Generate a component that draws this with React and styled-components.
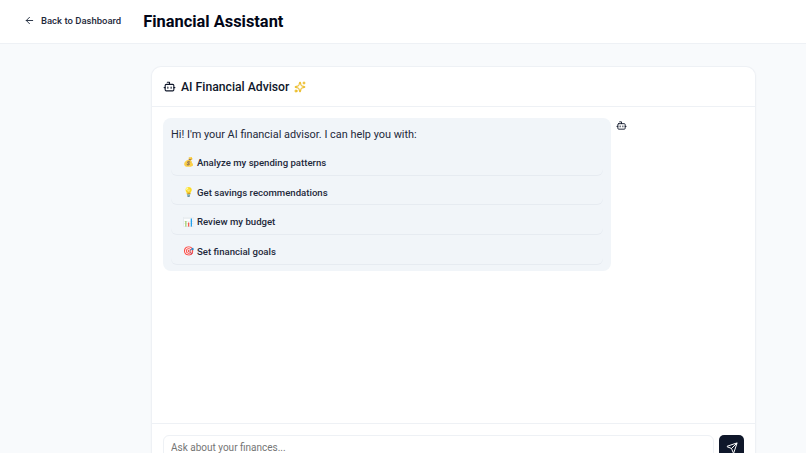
import React from 'react';
import styled, { createGlobalStyle } from 'styled-components';
import { ArrowLeft, Bot, Send, Sparkles } from 'lucide-react';

const suggestions = [
  { emoji: '💰', text: 'Analyze my spending patterns' },
  { emoji: '💡', text: 'Get savings recommendations' },
  { emoji: '📊', text: 'Review my budget' },
  { emoji: '🎯', text: 'Set financial goals' },
];

const App = () => {
  return (
    <Page>
      <GlobalStyle />
      <Header>
        <BackLink>
          <ArrowLeft size={11} strokeWidth={2} />
          Back to Dashboard
        </BackLink>
        <PageTitle>Financial Assistant</PageTitle>
      </Header>
      <Main>
        <Card>
          <CardHeader>
            <Bot size={13} strokeWidth={2} />
            <CardTitle>AI Financial Advisor</CardTitle>
            <Sparkles size={12} strokeWidth={2} color="#eab308" />
          </CardHeader>
          <Messages>
            <Bubble>
              <Intro>Hi! I'm your AI financial advisor. I can help you with:</Intro>
              <SuggestionList>
                {suggestions.map((item) => (
                  <Suggestion key={item.text}>
                    <Emoji>{item.emoji}</Emoji>
                    {item.text}
                  </Suggestion>
                ))}
              </SuggestionList>
            </Bubble>
            <BubbleIcon>
              <Bot size={11} strokeWidth={2} />
            </BubbleIcon>
          </Messages>
          <Composer>
            <ChatInput placeholder="Ask about your finances..." />
            <SendButton>
              <Send size={12} strokeWidth={2} />
            </SendButton>
          </Composer>
        </Card>
      </Main>
    </Page>
  );
};

const GlobalStyle = createGlobalStyle`
  html,
  body {
    margin: 0;
    height: 100%;
    overflow: hidden;
  }

  body {
    font-family: Roboto, sans-serif;
    color: #0f172a;
    background: #f8fafc;
  }

  * {
    box-sizing: border-box;
  }
`;

const Page = styled.div`
  height: 453px;
  overflow: hidden;
  background: #f8fafc;
`;

const Header = styled.header`
  height: 44px;
  display: flex;
  align-items: center;
  gap: 22px;
  padding: 0 24px;
  background: #ffffff;
  border-bottom: 1px solid #eef1f5;
`;

const BackLink = styled.a`
  display: flex;
  align-items: center;
  gap: 6px;
  margin-top: -3px;
  font-size: 9.5px;
  font-weight: 500;
  color: #1e293b;
`;

const PageTitle = styled.h1`
  margin: -1px 0 0;
  font-size: 16.4px;
  font-weight: 700;
  color: #020617;
`;

const Main = styled.main`
  padding: 23px 51px 0 152px;
`;

const Card = styled.section`
  height: 416px;
  display: flex;
  flex-direction: column;
  background: #ffffff;
  border-radius: 9px;
  box-shadow: 0 0 0 1px #eef1f5, 0 1px 3px rgba(15, 23, 42, 0.08);
`;

const CardHeader = styled.div`
  height: 40px;
  flex-shrink: 0;
  display: flex;
  align-items: center;
  gap: 5px;
  padding: 0 11px;
  border-bottom: 1px solid #eef1f5;
`;

const CardTitle = styled.h2`
  margin: 0;
  font-size: 12.2px;
  font-weight: 500;
  color: #0f172a;
`;

const Messages = styled.div`
  flex: 1;
  display: flex;
  align-items: flex-start;
  gap: 5px;
  padding: 11px;
`;

const Bubble = styled.div`
  width: 448px;
  padding: 8px 8px 7px;
  background: #f1f5f9;
  border-radius: 8px;
`;

const BubbleIcon = styled.div`
  display: flex;
  padding-top: 2px;
  color: #0f172a;
`;

const Intro = styled.p`
  margin: 0;
  font-size: 10.9px;
  line-height: 17px;
  color: #1e293b;
`;

const SuggestionList = styled.ul`
  margin: 2px 0 0;
  padding: 0;
  list-style: none;
`;

const Suggestion = styled.li`
  height: 29.7px;
  display: flex;
  align-items: center;
  gap: 5px;
  padding: 5px 12px 0;
  font-size: 9.6px;
  font-weight: 500;
  color: #1e293b;
  border-radius: 6px;
  box-shadow: 0 1px 0 #e6ebf1;
`;

const Emoji = styled.span`
  width: 9px;
  font-size: 9px;
  opacity: 0.85;
`;

const Composer = styled.div`
  height: 60px;
  flex-shrink: 0;
  display: flex;
  gap: 5px;
  padding: 11px;
  border-top: 1px solid #eef1f5;
`;

const ChatInput = styled.input`
  flex: 1;
  height: 25px;
  padding: 0 7px;
  font-family: inherit;
  font-size: 10px;
  background: #ffffff;
  border: 1px solid #eef1f5;
  border-radius: 6px;

  ::placeholder {
    color: #64748b;
  }
`;

const SendButton = styled.button`
  width: 25px;
  height: 25px;
  display: flex;
  align-items: center;
  justify-content: center;
  padding: 0;
  color: #ffffff;
  background: #0f172a;
  border: none;
  border-radius: 5px;
`;

export default App;
